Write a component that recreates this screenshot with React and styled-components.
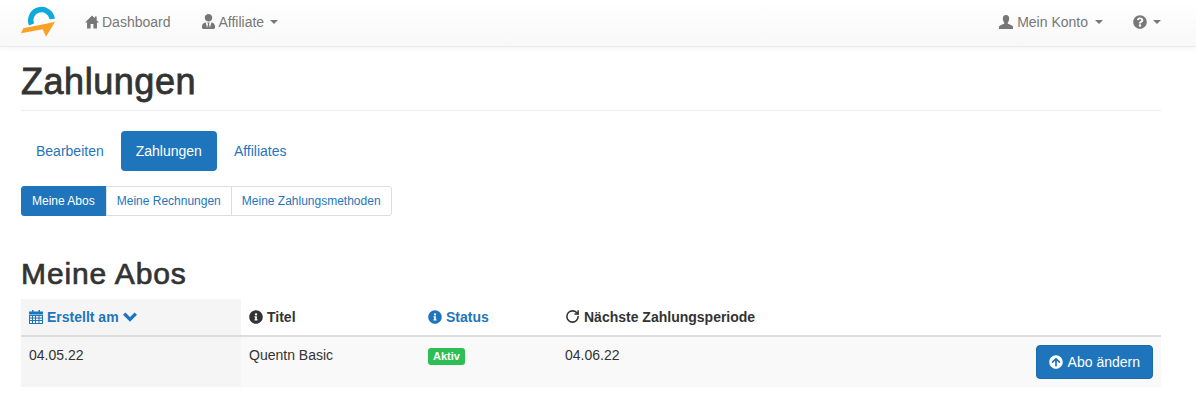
import React from 'react';
import styled, { createGlobalStyle } from 'styled-components';
import { FaUserTie, FaQuestionCircle, FaInfoCircle, FaArrowCircleUp } from 'react-icons/fa';
import { RotateCw } from 'lucide-react';

const Global = createGlobalStyle`
    * { box-sizing: border-box; }
    body {
        margin: 0;
        background: #fff;
        font-family: "Liberation Sans", Arial, sans-serif;
        font-size: 14px;
        line-height: 20px;
        color: #333;
    }
`;

function Logo() {
    return (
        <svg width="36" height="33" viewBox="20 5 36 33" fill="none">
            <path d="M31.5 24.5 A10.8 10.8 0 1 1 52.2 19" stroke="#0FA9DC" strokeWidth="5.4" />
            <path d="M21 33.3 L23.3 28.3 L45 24 L55 21.7 L46 36.7 L42.7 29.3 Z" fill="#F9A125" />
        </svg>
    );
}

function HomeIcon() {
    return (
        <svg width="14" height="14" viewBox="0 0 15 14" fill="currentColor" preserveAspectRatio="none">
            <path d="M7.5 0.5 L10.5 3.3 V1.5 H12.5 V5.2 L15 7.6 H12.8 V13.5 H9 V9 H6 V13.5 H2.2 V7.6 H0 Z" />
        </svg>
    );
}

function UserIcon() {
    return (
        <svg width="14" height="14" viewBox="0 0 14 14" fill="currentColor">
            <path d="M7 0 C9.2 0 10.3 1.6 10.2 3.6 C10.1 5.4 9.4 7 8.8 7.6 V8.8 C10.5 9.6 13.6 10.2 14 11.6 V14 H0 V11.6 C0.4 10.2 3.5 9.6 5.2 8.8 V7.6 C4.6 7 3.9 5.4 3.8 3.6 C3.7 1.6 4.8 0 7 0 Z" />
        </svg>
    );
}

function CalendarIcon() {
    return (
        <svg width="14" height="14" viewBox="0 0 14 14" fill="currentColor">
            <path d="M3 0 H4.5 V1.5 H9.5 V0 H11 V1.5 H14 V4.5 H0 V1.5 H3 Z" />
            <path fillRule="evenodd" d="M0 5 H14 V14 H0 Z M1 6 V7.5 H3 V6 Z M4 6 V7.5 H6 V6 Z M7 6 V7.5 H9.5 V6 Z M10.5 6 V7.5 H13 V6 Z M1 8.5 V10 H3 V8.5 Z M4 8.5 V10 H6 V8.5 Z M7 8.5 V10 H9.5 V8.5 Z M10.5 8.5 V10 H13 V8.5 Z M1 11 V13 H3 V11 Z M4 11 V13 H6 V11 Z M7 11 V13 H9.5 V11 Z M10.5 11 V13 H13 V11 Z" />
        </svg>
    );
}

function ChevronIcon() {
    return (
        <svg width="14" height="10" viewBox="0 0 14 10" fill="none" stroke="currentColor" strokeWidth="3.4">
            <path d="M1.2 1.6 L7 7.4 L12.8 1.6" />
        </svg>
    );
}

function App() {
    return (
        <>
            <Global />
            <Navbar>
                <LogoLink href="#"><Logo /></LogoLink>
                <NavItem href="#"><HomeIcon />Dashboard</NavItem>
                <NavItem href="#"><FaUserTie size={15} />Affiliate<Caret /></NavItem>
                <NavRight>
                    <NavItem href="#" $wide><UserIcon />Mein Konto<Caret /></NavItem>
                    <NavItem href="#"><FaQuestionCircle size={14} /><Caret /></NavItem>
                </NavRight>
            </Navbar>
            <Container>
                <PageHeader>Zahlungen</PageHeader>
                <Pills>
                    <Pill href="#">Bearbeiten</Pill>
                    <Pill href="#" $active>Zahlungen</Pill>
                    <Pill href="#">Affiliates</Pill>
                </Pills>
                <BtnGroup>
                    <GroupBtn href="#" $active>Meine Abos</GroupBtn>
                    <GroupBtn href="#">Meine Rechnungen</GroupBtn>
                    <GroupBtn href="#">Meine Zahlungsmethoden</GroupBtn>
                </BtnGroup>
                <SubTitle>Meine Abos</SubTitle>
                <Table>
                    <colgroup>
                        <col style={{ width: 220 }} />
                        <col style={{ width: 179 }} />
                        <col style={{ width: 137 }} />
                        <col />
                    </colgroup>
                    <thead>
                        <tr>
                            <Th $sorted><HeadLink href="#"><CalendarIcon />Erstellt am<ChevronIcon /></HeadLink></Th>
                            <Th><HeadText><FaInfoCircle size={14} />Titel</HeadText></Th>
                            <Th><HeadLink href="#"><FaInfoCircle size={14} />Status</HeadLink></Th>
                            <Th><HeadText><RotateCw size={15} strokeWidth={2.5} />Nächste Zahlungsperiode</HeadText></Th>
                        </tr>
                    </thead>
                    <tbody>
                        <tr>
                            <Td $sorted>04.05.22</Td>
                            <Td>Quentn Basic</Td>
                            <Td><Label>Aktiv</Label></Td>
                            <Td>
                                04.06.22
                                <ChangeBtn href="#"><FaArrowCircleUp size={14} />Abo ändern</ChangeBtn>
                            </Td>
                        </tr>
                    </tbody>
                </Table>
            </Container>
        </>
    );
}

export default App;

const Navbar = styled.nav`
    height: 47px;
    padding: 0 21px;
    display: flex;
    align-items: center;
    background: linear-gradient(to bottom, #fff 0%, #f8f8f8 100%);
    border-bottom: 1px solid #ececec;
    box-shadow: 0 1px 5px rgba(0, 0, 0, 0.06);
`;

const LogoLink = styled.a`
    display: flex;
    width: 49px;
    height: 33px;
    margin-left: -1px;
    margin-right: 1px;
    margin-top: -3px;
`;

const NavItem = styled.a`
    display: flex;
    align-items: center;
    gap: ${p => (p.$wide ? '4px' : '3px')};
    padding: 0 15px 2px;
    height: 46px;
    color: #777;
    text-decoration: none;
    svg { margin-top: -1px; }
`;

const NavRight = styled.div`
    display: flex;
    margin-left: auto;
    margin-right: -1px;
`;

const Caret = styled.span`
    display: inline-block;
    margin-left: 3px;
    width: 0;
    height: 0;
    border-top: 4px solid #777;
    border-left: 4px solid transparent;
    border-right: 4px solid transparent;
`;

const Container = styled.main`
    width: 1140px;
    margin-left: 21px;
`;

const PageHeader = styled.h1`
    margin: 0 0 20px;
    padding: 15px 0 9px;
    height: 64px;
    font-size: 36px;
    line-height: 40px;
    font-weight: 400;
    letter-spacing: 0.55px;
    -webkit-text-stroke: 0.8px #333;
    border-bottom: 1px solid #eee;
`;

const Pills = styled.div`
    display: flex;
    gap: 2px;
    margin-bottom: 15px;
`;

const Pill = styled.a`
    padding: 10px 15px;
    border-radius: 4px;
    text-decoration: none;
    color: ${p => (p.$active ? '#fff' : '#1f75bc')};
    background: ${p => (p.$active ? '#1f75bc' : 'transparent')};
`;

const BtnGroup = styled.div`
    display: flex;
    height: 30px;
`;

const GroupBtn = styled.a`
    padding: 5px 10px;
    font-size: 12px;
    line-height: 18px;
    text-decoration: none;
    border: 1px solid ${p => (p.$active ? '#1f75bc' : '#ddd')};
    margin-left: -1px;
    color: ${p => (p.$active ? '#fff' : '#1f75bc')};
    background: ${p => (p.$active ? '#1f75bc' : '#fff')};
    &:first-child {
        margin-left: 0;
        padding-right: 11px;
        border-radius: 3px 0 0 3px;
    }
    &:last-child { border-radius: 0 3px 3px 0; }
`;

const SubTitle = styled.h2`
    margin: 41px 0 9px;
    font-size: 30px;
    line-height: 33px;
    font-weight: 400;
    letter-spacing: 0.9px;
    -webkit-text-stroke: 0.7px #333;
`;

const Table = styled.table`
    width: 100%;
    border-collapse: collapse;
    table-layout: fixed;
`;

const Th = styled.th`
    height: 37px;
    padding: 7px 8px 8px;
    text-align: left;
    font-weight: 700;
    background: ${p => (p.$sorted ? '#f5f5f5' : '#fff')};
    border-bottom: 2px solid #ddd;
`;

const HeadText = styled.span`
    display: flex;
    align-items: center;
    gap: 4px;
`;

const HeadLink = styled.a`
    display: flex;
    align-items: center;
    gap: 4px;
    color: #1f75bc;
    text-decoration: none;
`;

const Td = styled.td`
    height: 50px;
    padding: 8px;
    vertical-align: top;
    background: ${p => (p.$sorted ? '#f5f5f5' : '#f9f9f9')};
`;

const Label = styled.span`
    display: block;
    width: fit-content;
    margin-top: 3px;
    padding: 2px 5px 3px;
    font-size: 11px;
    line-height: 12px;
    font-weight: 700;
    color: #fff;
    background: #2dbe55;
    border-radius: 3px;
`;

const ChangeBtn = styled.a`
    float: right;
    display: inline-flex;
    align-items: center;
    gap: 5px;
    height: 34px;
    padding: 6px 12px;
    color: #fff;
    text-decoration: none;
    background: #1f75bc;
    border: 1px solid #1b6aab;
    border-radius: 4px;
`;
